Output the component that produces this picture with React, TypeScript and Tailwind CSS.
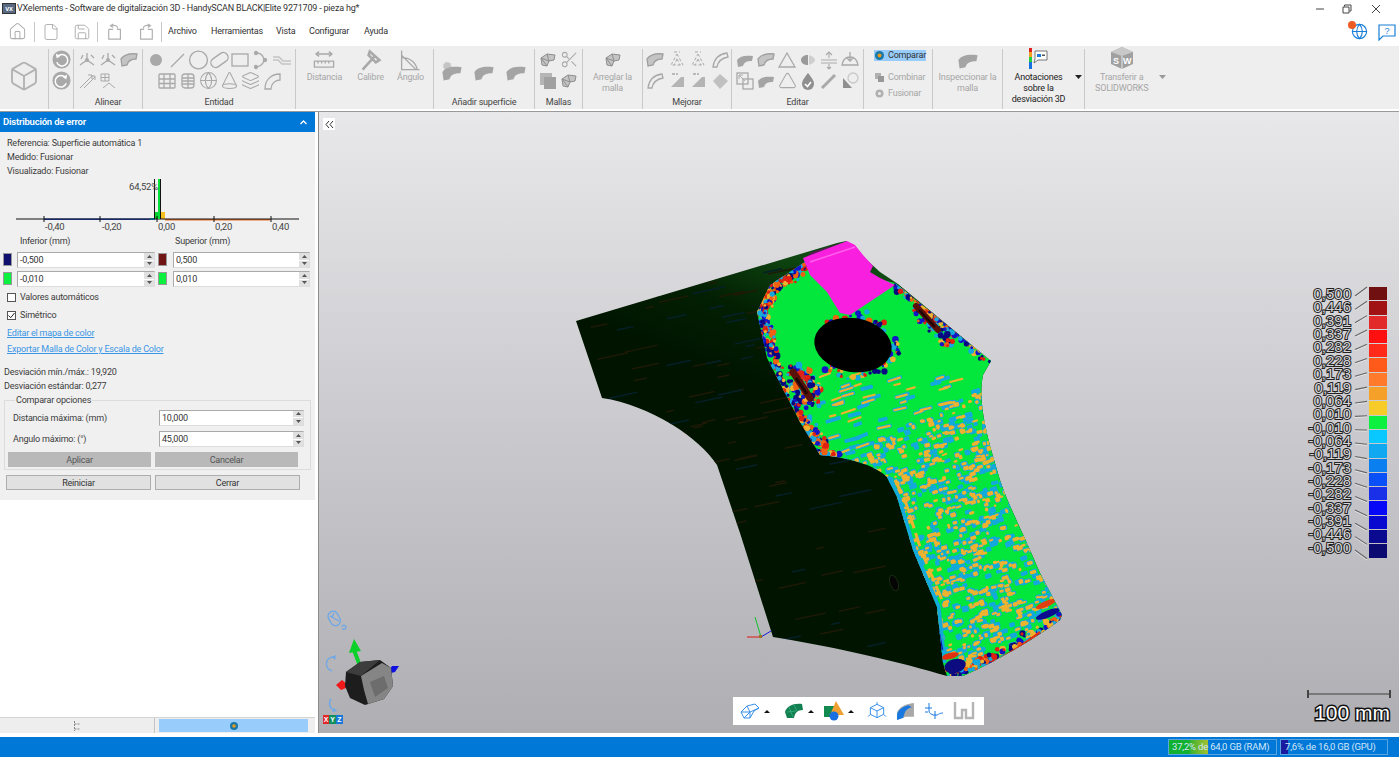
import type { ReactNode } from "react";
import { Box, Cone, File, Globe, House, Layers, Save, Scissors, Triangle } from "lucide-react";

const GREY = "#a9a9a9";

// seeded random, the speckle on the mesh has to stay the same between runs
const rng = (seed: number) => () => {
  seed = (seed + 0x6d2b79f5) | 0;
  let t = Math.imul(seed ^ (seed >>> 15), 1 | seed);
  t = (t + Math.imul(t ^ (t >>> 7), 61 | t)) ^ t;
  return ((t ^ (t >>> 14)) >>> 0) / 4294967296;
};

const RIGHT_SIDE =
  "L991 361 L983 375 C978 400 985 430 997 470 C1005 500 1020 525 1040 573 L1062 615 L1060 620 C1040 635 1000 660 963 676 L947 676";
const BODY = `M576 321 L837 243 L846 241 L880 272 L898 284 ${RIGHT_SIDE} C900 662 840 648 773 637 L740 533 L717 465 C700 438 650 405 602 398 Z`;
const COLORED = `M805 262 L895 283 ${RIGHT_SIDE} L943 663 L937 607 L913 550 L897 497 L887 477 C875 465 850 458 820 455 L800 422 L767 358 L757 312 L770 285 Z`;
const MAGENTA =
  "M803 258 L847 241 L855 245 L863 255 L873 266 L870 272 L880 278 L895 285 L850 315 L840 313 L827 292 L810 275 Z";

type Dot = { x: number; y: number; w: number; h: number; r: number; c: string };

const makeDots = () => {
  const r = rng(42);
  const cold: Dot[] = [];
  const warm: Dot[] = [];
  // speckle over the handle, sparse on the flat face
  for (let i = 0; i < 3100; i++) {
    const x = 815 + r() * 250;
    const y = 375 + r() * 305;
    const isFace = y < 458 - (x - 837) * 0.5;
    if (isFace && r() > 0.16) continue;
    const wave = Math.sin(x * 0.13 + y * 0.07) + Math.sin(y * 0.19 - x * 0.05);
    if (!isFace && wave < -0.7 && r() < 0.8) continue;
    const w = isFace ? 7 + r() * 9 : 2.5 + r() * 4;
    const h = isFace ? 2.2 : 2 + r() * 2.5;
    const a = -22 + r() * 10;
    if (r() < 0.7) cold.push({ x: x - 0.8, y: y - 0.8, w: w + 1.6, h: h + 1.6, r: a, c: "#13a9dc" });
    if (r() < 0.62) warm.push({ x, y, w, h, r: a, c: "#eeb32e" });
  }
  return [...cold, ...warm];
};

const alongEdge = (pts: number[][], n: number, spread: number, seed: number) => {
  const r = rng(seed);
  const cols = ["#1414c8", "#e02010", "#eeb32e", "#13a9dc", "#080880", "#f06010"];
  const out: { x: number; y: number; s: number; c: string }[] = [];
  for (let i = 0; i < n; i++) {
    const t = r() * (pts.length - 1);
    const k = Math.floor(t);
    const f = t - k;
    const a = pts[k];
    const b = pts[k + 1];
    out.push({
      x: a[0] + (b[0] - a[0]) * f + (r() - 0.3) * spread,
      y: a[1] + (b[1] - a[1]) * f + (r() - 0.5) * spread,
      s: 1.2 + r() * 2.2,
      c: cols[Math.floor(r() * cols.length)],
    });
  }
  return out;
};

const DOTS = makeDots();
const EDGE = [
  ...alongEdge([[805, 264], [772, 285], [759, 312], [769, 358], [802, 422], [822, 452]], 420, 14, 7),
  ...alongEdge([[895, 285], [945, 325], [989, 362]], 130, 8, 11),
  ...alongEdge([[947, 672], [990, 660], [1058, 618]], 170, 11, 13),
  ...alongEdge([[815, 452], [840, 456]], 30, 5, 21),
  // ring around the hole
  ...alongEdge([[817, 335], [830, 322], [860, 314], [888, 330], [896, 352], [880, 370], [850, 378], [825, 365]], 70, 8, 17),
  // both slots
  ...alongEdge([[795, 370], [812, 400]], 90, 18, 19),
  ...alongEdge([[915, 305], [945, 340]], 90, 16, 23),
];
const STREAKS = (() => {
  const r = rng(5);
  return Array.from({ length: 150 }, () => ({
    x: 585 + r() * 300,
    y: 270 + r() * 390,
    w: 8 + r() * 26,
    c: r() < 0.6 ? "#1f1a06" : "#06202a",
  }));
})();

const Model = () => (
  <g>
    <defs>
      <linearGradient id="bodyFill" x1="0.45" y1="0.02" x2="0.32" y2="0.32">
        <stop offset="0" stopColor="#0f4a12" />
        <stop offset="0.5" stopColor="#032003" />
        <stop offset="1" stopColor="#001400" />
      </linearGradient>
      <clipPath id="bodyClip">
        <path d={BODY} />
      </clipPath>
      <clipPath id="colorClip">
        <path d={COLORED} />
      </clipPath>
    </defs>
    <path d={BODY} fill="url(#bodyFill)" />
    <g clipPath="url(#bodyClip)">
      {STREAKS.map((s, i) => (
        <rect key={i} x={s.x} y={s.y} width={s.w} height={1.5} fill={s.c} transform={`rotate(-12 ${s.x} ${s.y})`} />
      ))}
    </g>
    <path d={COLORED} fill="#03e63c" />
    <g clipPath="url(#colorClip)">
      {DOTS.map((d, i) => (
        <rect key={i} x={d.x} y={d.y} width={d.w} height={d.h} rx={1.2} fill={d.c} transform={`rotate(${d.r} ${d.x} ${d.y})`} />
      ))}
      <path d="M887 477 L897 497 L913 550 L937 607 L943 663" fill="none" stroke="#13a9dc" strokeWidth="7" />
      <path d="M895 480 L905 500 L921 550 L945 607" fill="none" stroke="#eeb32e" strokeWidth="3" strokeDasharray="14 5" />
      <path d="M885 477 L895 500 L910 550 L934 607 L942 650" fill="none" stroke="#1414b0" strokeWidth="2.5" />
      {EDGE.map((d, i) => (
        <circle key={i} cx={d.x} cy={d.y} r={d.s} fill={d.c} />
      ))}
      <path d="M793 372 L810 398" stroke="#5a1208" strokeWidth="7" strokeLinecap="round" />
      <path d="M796 378 L807 394" stroke="#200604" strokeWidth="3" />
      <path d="M916 306 L938 330" stroke="#5a1208" strokeWidth="6" strokeLinecap="round" />
      <path d="M919 310 L935 327" stroke="#200604" strokeWidth="2.5" />
      <ellipse cx="955" cy="666" rx="11" ry="7" fill="#0c0c80" transform="rotate(-15 955 666)" />
      <ellipse cx="950" cy="656" rx="9" ry="3" fill="#e03010" transform="rotate(-15 950 656)" />
      <ellipse cx="1048" cy="614" rx="13" ry="3.5" fill="#0c0c90" transform="rotate(-22 1048 614)" />
      <ellipse cx="1046" cy="604" rx="11" ry="3" fill="#e04010" transform="rotate(-22 1046 604)" />
      <path d="M985 668 C1005 655 1025 645 1040 632" stroke="#e03010" strokeWidth="2.5" fill="none" />
    </g>
    <path d="M805 258 L838 244 L812 252 Z" fill="#5a1a5a" />
    <path d={MAGENTA} fill="#f820de" />
    <path d="M810 262 L855 247" stroke="#ff60ee" strokeWidth="1.5" fill="none" />
    <ellipse cx="853" cy="345" rx="39" ry="27" transform="rotate(9 853 345)" fill="#000" />
    <ellipse cx="894" cy="583" rx="4" ry="8" transform="rotate(-20 894 583)" fill="#050505" stroke="#1a2a10" />
  </g>
);

const Arrow = ({ d, fill }: { d: string; fill: string }) => <path d={d} fill={fill} />;

const Gizmo = () => (
  <g>
    <g fill="none" stroke="#6ea8e6" strokeWidth="1.3">
      <rect x="329" y="611" width="10" height="15" rx="5" transform="rotate(-28 334 618)" />
      <path d="M330 616 L339 621 M334 613 L332 617" />
      <path d="M342 627 a2 2 0 1 1 1 2 v1" />
      <path d="M335 657 a7 7 0 0 0 -3 14" />
      <path d="M331 699 a7 7 0 0 0 3 11" />
    </g>
    <path d="M332 657 L336 655 L335 660 Z M334 708 L337 711 L332 712 Z" fill="#6ea8e6" />
    <path d="M360 666 L354 650" stroke="#0cd02a" strokeWidth="4" />
    <Arrow d="M354 639 L361 651 L349 653 Z" fill="#0cd02a" />
    <Arrow d="M387 674 L392 666 L399 666 L395 672 Z" fill="#1010e0" />
    <Arrow d="M336 685 L342 680 L347 684 L346 688 L341 690 Z" fill="#f01818" />
    <path d="M346 672 L360 662 L380 660 L391 668 L393 686 L384 699 L365 705 L350 698 L345 686 Z" fill="#1d1d1d" />
    <path d="M361 676 L382 663 L391 668 L393 686 L384 699 L368 704 L364 690 Z" fill="#858585" />
    <path d="M346 672 L360 662 L380 660 L361 676 Z" fill="#3d3d3d" />
    <path d="M370 682 L384 676 L388 688 L375 697 Z" fill="#6d6d6d" />
  </g>
);

const Axes = () => (
  <g strokeWidth="1">
    <path d="M761 637 L755 617" stroke="#10c030" />
    <path d="M761 637 L747 637" stroke="#e01818" />
    <path d="M761 637 L771 631" stroke="#1818e0" />
    <rect x="759" y="635" width="3" height="3" fill="#a07020" />
  </g>
);

const Leaders = () => (
  <g fill="none" strokeWidth="1.1">
    {Array.from({ length: 20 }, (_, i) => {
      const from = 296 + i * 13.37;
      const to = 287 + i * 14.3;
      return (
        <g key={i}>
          <path d={`M1355 ${from + 1} L1367 ${to + 1}`} stroke="#e6e6e6" />
          <path d={`M1355 ${from} L1367 ${to}`} stroke="#666" />
        </g>
      );
    })}
    <path d="M1308 694 L1390 694" stroke="#666" strokeWidth="1.5" />
    <path d="M1308 690 L1308 698 M1390 690 L1390 698" stroke="#444" strokeWidth="2" />
  </g>
);

// ---- ribbon ----

const Ic = ({ children, s = 20 }: { children: ReactNode; s?: number }) => (
  <svg width={s} height={s} viewBox="0 0 20 20" fill="none" stroke={GREY} strokeWidth="1.3">
    {children}
  </svg>
);

const Patch = ({ s = 20, sun }: { s?: number; sun?: boolean }) => (
  <Ic s={s}>
    {sun && <circle cx="6" cy="5" r="3" fill="#c4c4c4" stroke="#c4c4c4" strokeDasharray="1 1" />}
    <path d="M2 10 C5 6 10 5 18 6 L17 11 C12 11 9 12 8 16 L3 17 Z" fill="#a4a4a4" stroke="none" />
  </Ic>
);
const PatchLight = () => (
  <Ic>
    <path d="M2 9 C5 5 10 3 18 4 L17 9 C12 9 9 11 8 15 L3 16 Z" fill="#c4c4c4" stroke="#a0a0a0" />
  </Ic>
);
const Mesh = () => (
  <Ic>
    <path d="M3 8 L9 4 L17 5 L16 10 L11 11 L9 16 L4 15 Z" fill="#c4c4c4" stroke="none" />
    <path d="M3 8 L9 4 L17 5 L16 10 L11 11 L9 16 L4 15 Z M9 4 L11 11 M3 8 L11 11 M3 8 L9 16" strokeWidth="1" stroke="#8e8e8e" />
  </Ic>
);
const Tri = () => (
  <Ic>
    <path d="M10 3 L18 17 L2 17 Z" />
  </Ic>
);
const TriDots = () => (
  <Ic>
    <path d="M10 4 L16 15 L4 15 Z M7 2 L13 2 M10 9 L7 15 M10 9 L13 15" strokeDasharray="3 2" strokeWidth="1" />
  </Ic>
);
const Swoop = () => (
  <Ic>
    <path d="M3 17 C4 9 9 4 17 3 L18 7 C12 8 8 11 7 17 Z" />
  </Ic>
);
const Wedge = () => (
  <Ic>
    <path d="M4 16 L14 6 L17 6 L17 16 Z" fill="#b4b4b4" stroke="none" />
    <path d="M5 3 L11 3" strokeDasharray="3 1" />
  </Ic>
);
const Axis = () => (
  <Ic>
    <path d="M10 10 L10 3 M10 10 L3 15 M10 10 L17 15 M6 5 L4 9 M14 5 L17 8" />
    <circle cx="10" cy="10" r="2" fill={GREY} stroke="none" />
  </Ic>
);
const Planes = () => (
  <Ic>
    <path d="M2 10 L18 10 M2 13 L18 13" strokeWidth="1.1" />
    <path d="M10 2 L10 8 M7 5 L10 2 L13 5 M10 14 L10 19 M8 17 L10 19 L12 17" strokeWidth="1.1" />
  </Ic>
);

const Cell = ({ children, w = "w-[21px]" }: { children: ReactNode; w?: string }) => (
  <div className={`${w} h-[21px] flex items-center justify-center`}>{children}</div>
);

const RibbonGroup = ({ w, label, children }: { w: string; label?: string; children: ReactNode }) => (
  <div className={`${w} h-[60px] mt-[3px] shrink-0 flex flex-col items-center border-r border-[#c9c9c9]`}>
    <div className="flex-1 flex flex-col items-center justify-start min-h-0">{children}</div>
    {label && <div className="h-[13px] leading-[13px] text-[9px] text-[#444] whitespace-nowrap">{label}</div>}
  </div>
);

const Row = ({ children }: { children: ReactNode }) => <div className="flex items-center">{children}</div>;

const Tool = ({ icon, lines, dark }: { icon: ReactNode; lines: string[]; dark?: boolean }) => (
  <div className="flex flex-col items-center">
    <div className="h-[21px] flex items-center justify-center">{icon}</div>
    <div className={`text-[9px] leading-[11px] text-center whitespace-nowrap mt-[2px] ${dark ? "text-[#222]" : "text-[#a6a6a6]"}`}>
      {lines.map((l) => (
        <div key={l}>{l}</div>
      ))}
    </div>
  </div>
);

const Caret = ({ c = "#222" }: { c?: string }) => (
  <svg width="7" height="4" viewBox="0 0 7 4">
    <path d="M0 0 L7 0 L3.5 4 Z" fill={c} />
  </svg>
);

const Ribbon = () => (
  <div className="h-[63px] bg-[#eeeeee] flex">
    <RibbonGroup w="w-[49px]">
      <div className="h-[54px] flex items-center">
        <Box size={32} color="#b2b2b2" strokeWidth={1.4} />
      </div>
    </RibbonGroup>
    <RibbonGroup w="w-[25px]">
      <Cell>
        <svg width="19" height="19" viewBox="0 0 20 20">
          <circle cx="10" cy="10" r="9.5" fill="#a9a9a9" />
          <path d="M6 7 a6 6 0 1 1 -1 6" fill="none" stroke="#fff" strokeWidth="1.6" />
          <path d="M4 4 L9 6 L5 9 Z" fill="#fff" />
        </svg>
      </Cell>
      <Cell>
        <svg width="19" height="19" viewBox="0 0 20 20">
          <circle cx="10" cy="10" r="9.5" fill="#a9a9a9" />
          <path d="M14 7 a6 6 0 1 0 1 6" fill="none" stroke="#fff" strokeWidth="1.6" />
          <path d="M16 4 L11 6 L15 9 Z" fill="#fff" />
        </svg>
      </Cell>
    </RibbonGroup>
    <RibbonGroup w="w-[69px]" label="Alinear">
      <Row>
        <Cell><Axis /></Cell>
        <Cell><Axis /></Cell>
        <Cell><PatchLight /></Cell>
      </Row>
      <Row>
        <Cell>
          <Ic>
            <path d="M3 17 L15 5 M7 17 L18 6 M11 4 L15 4 L15 8 M14 5 L18 5 L18 9" strokeWidth="1" />
          </Ic>
        </Cell>
        <Cell>
          <Ic>
            <path d="M3 3 H11 V10 H3 Z M7 3 V10 M3 6.5 H11 M11 12 L17 17 M11 12 L5 17" strokeWidth="1" />
          </Ic>
        </Cell>
        <Cell><span /></Cell>
      </Row>
    </RibbonGroup>
    <RibbonGroup w="w-[153px]" label="Entidad">
      <Row>
        <Cell><svg width="14" height="14"><circle cx="7" cy="7" r="6" fill={GREY} /></svg></Cell>
        <Cell><Ic><path d="M4 17 L17 4" /></Ic></Cell>
        <Cell><Ic s={22}><circle cx="10" cy="10" r="8.5" /></Ic></Cell>
        <Cell><Ic s={22}><rect x="1" y="5.5" width="18" height="9" rx="4.5" transform="rotate(-35 10 10)" /></Ic></Cell>
        <Cell><Ic s={20}><rect x="2" y="4" width="16" height="12" /></Ic></Cell>
        <Cell><Ic><path d="M6 3 C14 4 16 14 6 17" /><circle cx="5" cy="3" r="1.5" fill={GREY} /><circle cx="14" cy="10" r="1.5" fill={GREY} /><circle cx="5" cy="17" r="1.5" fill={GREY} /></Ic></Cell>
        <Cell><Ic><path d="M1 7 H7 L11 11 H19 M1 10 H6 L10 14 H19" stroke="#c4c4c4" strokeWidth="1.6" /></Ic></Cell>
      </Row>
      <Row>
        <Cell><Ic><rect x="2" y="3" width="16" height="14" rx="1" /><path d="M7 3 V17 M13 3 V17 M2 8 H18 M2 12.5 H18" /></Ic></Cell>
        <Cell><Ic><rect x="4" y="3" width="12" height="14" rx="3" /><path d="M10 3 V17 M4 7 H16 M4 10 H16 M4 13 H16" /></Ic></Cell>
        <Cell><Globe size={19} color={GREY} strokeWidth={1.3} /></Cell>
        <Cell><Cone size={19} color={GREY} strokeWidth={1.3} /></Cell>
        <Cell><Layers size={19} color={GREY} strokeWidth={1.3} /></Cell>
        <Cell><Ic><path d="M3 18 C3 9 9 3 18 3 L18 9 C13 9 9 13 9 18 Z" /></Ic></Cell>
      </Row>
    </RibbonGroup>
    <RibbonGroup w="w-[138px]">
      <div className="flex w-full">
        <div className="w-[52px] flex justify-center">
          <Tool
            lines={["Distancia"]}
            icon={
              <Ic s={24}>
                <path d="M3 5 H17 M3 5 L6 3 M3 5 L6 7 M17 5 L14 3 M17 5 L14 7 M2 11 H18 V16 H2 Z M5 11 V13 M8 11 V13 M11 11 V13 M14 11 V13" strokeWidth="1.1" />
              </Ic>
            }
          />
        </div>
        <div className="w-[40px] flex justify-center">
          <Tool
            lines={["Calibre"]}
            icon={
              <Ic s={24}>
                <path d="M3 18 L13 7 M9 3 L17 10 L14 12 L8 6 Z" strokeWidth="2.2" />
              </Ic>
            }
          />
        </div>
        <div className="w-[40px] flex justify-center">
          <Tool
            lines={["Ángulo"]}
            icon={
              <Ic s={24}>
                <path d="M3 2 V18 H18 M3 6 L15 18 M3 8 C10 8 15 12 16 18" strokeWidth="1.1" />
              </Ic>
            }
          />
        </div>
      </div>
    </RibbonGroup>
    <RibbonGroup w="w-[101px]" label="Añadir superficie">
      <div className="flex gap-[8px] h-[46px] items-center">
        <Patch s={24} sun />
        <Patch s={24} />
        <Patch s={24} />
      </div>
    </RibbonGroup>
    <RibbonGroup w="w-[48px]" label="Mallas">
      <Row>
        <Cell><Mesh /></Cell>
        <Cell><Scissors size={19} color={GREY} strokeWidth={1.3} /></Cell>
      </Row>
      <Row>
        <Cell><svg width="18" height="18"><rect x="1" y="1" width="12" height="12" fill="#b5b5b5" /><rect x="5" y="5" width="12" height="12" fill="#a0a0a0" /></svg></Cell>
        <Cell><Mesh /></Cell>
      </Row>
    </RibbonGroup>
    <RibbonGroup w="w-[60px]">
      <Tool lines={["Arreglar la", "malla"]} icon={<Mesh />} />
    </RibbonGroup>
    <RibbonGroup w="w-[89px]" label="Mejorar">
      <Row>
        <Cell w="w-[22px]"><PatchLight /></Cell>
        <Cell w="w-[21px]"><TriDots /></Cell>
        <Cell w="w-[22px]"><TriDots /></Cell>
        <Cell w="w-[21px]"><Swoop /></Cell>
      </Row>
      <Row>
        <Cell w="w-[22px]"><Swoop /></Cell>
        <Cell w="w-[21px]"><Wedge /></Cell>
        <Cell w="w-[22px]"><Wedge /></Cell>
        <Cell w="w-[21px]"><Ic><path d="M10 3 L18 10 L10 18 L3 10 Z" fill="#c0c0c0" stroke="none" /></Ic></Cell>
      </Row>
    </RibbonGroup>
    <RibbonGroup w="w-[132px]" label="Editar">
      <Row>
        <Cell><Patch /></Cell>
        <Cell><PatchLight /></Cell>
        <Cell><Tri /></Cell>
        <Cell><Ic><path d="M10 5 V15 C6 15 3 13 3 10 C3 7 6 5 10 5 Z" fill="#9a9a9a" stroke="none" /><path d="M11 5 C14 6 17 8 17 10 C17 12 14 14 11 15 Z" fill="#cfcfcf" stroke="none" /></Ic></Cell>
        <Cell><Planes /></Cell>
        <Cell><Ic><path d="M2 15 C3 9 6 7 10 7 C14 7 17 9 18 15 Z M10 2 V11 M7 8 L10 11 L13 8" /></Ic></Cell>
      </Row>
      <Row>
        <Cell><Ic><rect x="2" y="2" width="11" height="11" /><rect x="8" y="8" width="10" height="10" /><path d="M4 4 L10 10 M4 8 V4 H8" strokeWidth="1" /></Ic></Cell>
        <Cell><Patch /></Cell>
        <Cell><Triangle size={19} color={GREY} strokeWidth={1.3} /></Cell>
        <Cell><Ic><path d="M10 2 C6 7 4 10 4 13 a6 6 0 0 0 12 0 C16 10 14 7 10 2 Z" fill="#8f8f8f" stroke="none" /><path d="M7 13 L9.5 15.5 L13 11" stroke="#fff" strokeWidth="1.6" /></Ic></Cell>
        <Cell><Ic><path d="M3 17 L16 4" strokeWidth="3" /></Ic></Cell>
        <Cell><Ic><path d="M3 17 V7 L12 17 Z" fill="#8f8f8f" stroke="none" /><circle cx="13" cy="7" r="5" stroke="#c8c8c8" /></Ic></Cell>
      </Row>
    </RibbonGroup>
    <RibbonGroup w="w-[69px]">
      <div className="w-full pl-[5px] flex flex-col text-[9px] leading-[11px] text-[#a6a6a6]">
        <div className="h-[11px] flex items-center gap-[4px] bg-[#98ccfa] text-[#333] mt-[1px] mb-[11px] pl-[1px] mr-[1px]">
          <svg width="9" height="9"><circle cx="4.5" cy="4.5" r="4.5" fill="#1878a8" /><circle cx="4.5" cy="4.5" r="2" fill="#e89a20" /></svg>
          Comparar
        </div>
        <div className="h-[11px] flex items-center gap-[4px] mb-[5px] pl-[1px]">
          <svg width="9" height="9"><rect x="0" y="0" width="6" height="6" fill="#b0b0b0" /><rect x="3" y="3" width="6" height="6" fill="#989898" /></svg>
          Combinar
        </div>
        <div className="h-[11px] flex items-center gap-[4px] pl-[1px]">
          <svg width="9" height="9"><circle cx="4.5" cy="4.5" r="4" fill="#b0b0b0" /><circle cx="4.5" cy="4.5" r="1.5" fill="#eee" /></svg>
          Fusionar
        </div>
      </div>
    </RibbonGroup>
    <RibbonGroup w="w-[70px]">
      <Tool lines={["Inspeccionar la", "malla"]} icon={<Patch s={24} />} />
    </RibbonGroup>
    <RibbonGroup w="w-[82px]">
      <div className="flex items-start gap-[10px] pl-[7px]">
        <Tool
          dark
          lines={["Anotaciones", "sobre la", "desviación 3D"]}
          icon={
            <svg width="22" height="22" viewBox="0 0 22 22" className="-mt-[2px]">
              <rect x="2" y="0" width="3" height="4" fill="#e02020" />
              <rect x="2" y="4" width="3" height="5" fill="#f0a020" />
              <rect x="2" y="9" width="3" height="5" fill="#20d040" />
              <rect x="2" y="14" width="3" height="7" fill="#1870e0" />
              <path d="M8 3 H20 V12 H11 L7 15 L8 11 Z" fill="#fff" stroke="#555" strokeWidth="0.8" />
              <rect x="10" y="6" width="4" height="3" fill="#1878e0" />
              <rect x="15" y="6.5" width="3" height="1.5" fill="#555" />
            </svg>
          }
        />
        <div className="mt-[26px]"><Caret /></div>
      </div>
    </RibbonGroup>
    <div className="flex items-start mt-[3px] pl-[10px] gap-[11px]">
      <Tool
        lines={["Transferir a", "SOLIDWORKS"]}
        icon={
          <svg width="24" height="24" viewBox="0 0 24 24" className="-mt-[4px]">
            <path d="M12 1 L23 6 V18 L12 23 L1 18 V6 Z" fill="#a0a0a0" />
            <path d="M12 1 L23 6 L12 10 L1 6 Z" fill="#c8c8c8" />
            <path d="M12 10 V23" stroke="#e8e8e8" />
            <text x="3" y="18" fontSize="9" fontWeight="700" fill="#fff" fontFamily="Liberation Sans">S</text>
            <text x="13" y="18" fontSize="9" fontWeight="700" fill="#fff" fontFamily="Liberation Sans">W</text>
          </svg>
        }
      />
      <div className="mt-[26px]"><Caret c="#999" /></div>
    </div>
  </div>
);

// ---- top rows ----

const TitleBar = () => (
  <div className="h-[17px] flex items-center bg-white">
    <div className="w-[14px] h-[11px] ml-[2px] bg-[#5a6a82] border border-[#333] text-[6px] leading-[9px] text-white text-center font-bold overflow-hidden">VX</div>
    <div className="ml-[1px] text-[9px] text-[#333] whitespace-nowrap">VXelements - Software de digitalización 3D - HandySCAN BLACK|Elite 9271709 - pieza hg*</div>
    <div className="ml-auto flex items-center text-[#333]">
      <svg width="10" height="10" className="mr-[17px]"><path d="M1 5 H9" stroke="#444" /></svg>
      <svg width="10" height="10" className="mr-[19px]"><path d="M2.5 2.5 V1 H9 V7 H7.5 M1 3 H7 V9 H1 Z" fill="none" stroke="#444" /></svg>
      <svg width="10" height="10" className="mr-[18px]"><path d="M1 1 L9 9 M9 1 L1 9" stroke="#444" /></svg>
    </div>
  </div>
);

const Sep = () => <div className="w-px h-[20px] bg-[#c6c6c6]" />;

const PageArrow = ({ flip }: { flip?: boolean }) => (
  <svg width="18" height="18" viewBox="0 0 20 20" fill="none" stroke="#b0b0b0" strokeWidth="1.3" className={flip ? "-scale-x-100" : ""}>
    <path d="M3 7 H8 M12 7 H16 V18 H3 V7" />
    <path d="M13 6 C13 3 10 2 6 3 M8 1 L5 3 L8 5" />
  </svg>
);

const MenuBar = () => (
  <div className="h-[29px] flex items-center bg-white text-[9px] text-[#333]">
    <div className="w-[34px] flex justify-center"><House size={19} color="#b0b0b0" strokeWidth={1.3} /></div>
    <Sep />
    <div className="w-[30px] flex justify-center ml-[1px]"><File size={18} color="#b0b0b0" strokeWidth={1.3} /></div>
    <div className="w-[31px] flex justify-center"><Save size={18} color="#b0b0b0" strokeWidth={1.3} /></div>
    <Sep />
    <div className="w-[31px] flex justify-center ml-[1px]"><PageArrow /></div>
    <div className="w-[31px] flex justify-center"><PageArrow flip /></div>
    <Sep />
    <div className="ml-[6px] w-[43px]">Archivo</div>
    <div className="w-[65px]">Herramientas</div>
    <div className="w-[33px]">Vista</div>
    <div className="w-[55px]">Configurar</div>
    <div>Ayuda</div>
    <div className="ml-auto flex items-center gap-[10px] mr-[3px]">
      <div className="relative">
        <Globe size={17} color="#1a7fd8" strokeWidth={1.6} />
        <div className="absolute -top-[2px] -left-[3px] w-[8px] h-[8px] rounded-full bg-[#ee5a24]" />
      </div>
      <svg width="18" height="18" viewBox="0 0 18 18">
        <path d="M1 2 H17 V13 H5 L1 17 Z" fill="none" stroke="#1a7fd8" strokeWidth="1.2" />
        <text x="6.5" y="11" fontSize="9" fill="#1a7fd8" fontFamily="Liberation Sans">?</text>
      </svg>
    </div>
  </div>
);

// ---- left panel ----

const Spin = ({ value, w }: { value: string; w: string }) => (
  <div className={`${w} h-[16px] flex bg-white border border-[#aaa] border-r-[#ddd] border-b-[#ddd]`}>
    <div className="flex-1 pl-[2px] text-[9px] leading-[14px] text-[#333]">{value}</div>
    <div className="w-[10px] flex flex-col gap-px bg-white">
      <div className="flex-1 bg-[#e0e0e0] flex items-center justify-center">
        <svg width="5" height="3"><path d="M2.5 0 L5 3 H0 Z" fill="#555" /></svg>
      </div>
      <div className="flex-1 bg-[#e0e0e0] flex items-center justify-center">
        <svg width="5" height="3"><path d="M0 0 H5 L2.5 3 Z" fill="#555" /></svg>
      </div>
    </div>
  </div>
);

const Histogram = () => (
  <svg width="315" height="56" viewBox="0 178 315 56" className="block">
    <rect x="44" y="218.5" width="106" height="1.5" fill="#2040c0" />
    <rect x="150" y="218" width="5" height="2" fill="#10b0e0" />
    <rect x="165" y="219" width="105" height="1.5" fill="#e8702a" />
    <rect x="155" y="212" width="3" height="7" fill="#05d030" />
    <rect x="161" y="212" width="4" height="7" fill="#f5c020" />
    <path d="M16 219 H299" stroke="#111" strokeWidth="1.2" />
    <path d="M44 216 V222 M100 216 V222 M157 216 V222 M214 216 V222 M271 216 V222" stroke="#111" />
    <rect x="158" y="179" width="2.5" height="40" fill="#03e03c" />
    <path d="M154.5 179 V219 M160.5 179 V219" stroke="#111" />
    <g fontSize="9.5" fill="#444" fontFamily="Roboto">
      <text x="129" y="190">64,52%</text>
      <text x="45" y="230">-0,40</text>
      <text x="102" y="230">-0,20</text>
      <text x="158" y="230">0,00</text>
      <text x="215" y="230">0,20</text>
      <text x="272" y="230">0,40</text>
    </g>
  </svg>
);

const Check = ({ on, label }: { on?: boolean; label: string }) => (
  <div className="h-[14px] flex items-center pl-[7px] gap-[4px]">
    <div className="w-[9px] h-[9px] bg-white border border-[#555] flex items-center justify-center">
      {on && (
        <svg width="7" height="7" viewBox="0 0 7 7">
          <path d="M0.5 3.5 L2.7 5.7 L6.5 1" fill="none" stroke="#222" />
        </svg>
      )}
    </div>
    <span>{label}</span>
  </div>
);

const Btn = ({ label, w, off }: { label: string; w: string; off?: boolean }) => (
  <div
    className={`${w} h-[15px] flex items-center justify-center border text-[9px] ${
      off ? "bg-[#b9b9b9] border-[#b9b9b9] text-[#555]" : "bg-[#e1e1e1] border-[#adadad] text-[#333]"
    }`}
  >
    {label}
  </div>
);

const Panel = () => (
  <div className="w-[315px] shrink-0 flex flex-col text-[9px] leading-[14px] text-[#3c3c3c]">
    <div className="h-[20px] bg-[#0078d7] flex items-center justify-between pl-[3px] pr-[8px] text-white font-semibold text-[9.5px]">
      <span>Distribución de error</span>
      <svg width="7" height="5"><path d="M0.5 4 L3.5 1 L6.5 4" fill="none" stroke="#fff" strokeWidth="1.3" /></svg>
    </div>
    <div className="h-[368px] bg-[#f0f0f0] pt-[4px]">
      <div className="pl-[7px]">Referencia: Superficie automática 1</div>
      <div className="pl-[7px]">Medido: Fusionar</div>
      <div className="pl-[7px]">Visualizado: Fusionar</div>
      <Histogram />
      <div className="flex">
        <div className="w-[175px] pl-[20px]">Inferior (mm)</div>
        <div>Superior (mm)</div>
      </div>
      <div className="mt-[4px] flex flex-col gap-[3px]">
        {[
          ["#10106e", "-0,500", "#701414", "0,500"],
          ["#0cf040", "-0,010", "#0cf040", "0,010"],
        ].map(([a, av, b, bv]) => (
          <div key={av} className="flex h-[16px]">
            <div className="w-[9px] h-[13px] ml-[3px] mr-[5px] mt-[1px] border border-[#999]" style={{ background: a }} />
            <Spin value={av} w="w-[138px]" />
            <div className="w-[9px] h-[13px] ml-[3px] mr-[6px] mt-[1px] border border-[#999]" style={{ background: b }} />
            <Spin value={bv} w="w-[137px]" />
          </div>
        ))}
      </div>
      <div className="mt-[3px]"><Check label="Valores automáticos" /></div>
      <div className="mt-[4px]"><Check on label="Simétrico" /></div>
      <div className="mt-[4px] pl-[7px] text-[#3a96e6] underline">Editar el mapa de color</div>
      <div className="mt-[2px] pl-[7px] text-[#3a96e6] underline">Exportar Malla de Color y Escala de Color</div>
      <div className="mt-[9px] pl-[4px]">Desviación mín./máx.: 19,920</div>
      <div className="pl-[4px]">Desviación estándar: 0,277</div>
      <fieldset className="ml-[4px] w-[307px] h-[77px] border border-[#dcdcdc] px-[4px]">
        <legend className="ml-[6px] px-px">Comparar opciones</legend>
        <div className="mt-[2px] h-[17px] flex items-center">
          <div className="w-[150px] pl-[4px]">Distancia máxima: (mm)</div>
          <Spin value="10,000" w="w-[145px]" />
        </div>
        <div className="mt-[5px] h-[16px] flex items-center">
          <div className="w-[150px] pl-[4px]">Angulo máximo: (°)</div>
          <Spin value="45,000" w="w-[145px]" />
        </div>
        <div className="mt-[5px] flex gap-[4px] -ml-px">
          <Btn off label="Aplicar" w="w-[143px]" />
          <Btn off label="Cancelar" w="w-[143px]" />
        </div>
      </fieldset>
      <div className="mt-[5px] ml-[6px] flex gap-[4px]">
        <Btn label="Reiniciar" w="w-[145px]" />
        <Btn label="Cerrar" w="w-[145px]" />
      </div>
    </div>
    <div className="flex-1 bg-white" />
    <div className="h-[16px] bg-[#eeeeee] border-t border-[#d4d4d4] flex items-center">
      <div className="w-[155px] h-full flex items-center justify-center border-r border-[#c4c4c4]">
        <svg width="8" height="10" viewBox="0 0 8 10">
          <path d="M1.5 0 V10 M1.5 3 H7 M1.5 8 H7" stroke="#888" strokeDasharray="2 1" />
        </svg>
      </div>
      <div className="ml-[4px] w-[149px] h-[13px] bg-[#98ccfa] flex items-center justify-center">
        <svg width="8" height="8"><circle cx="4" cy="4" r="4" fill="#1878a8" /><circle cx="4" cy="4" r="1.8" fill="#e89a20" /></svg>
      </div>
    </div>
  </div>
);

// ---- viewport ----

const SCALE = ["0,500", "0,446", "0,391", "0,337", "0,282", "0,228", "0,173", "0,119", "0,064", "0,010", "-0,010", "-0,064", "-0,119", "-0,173", "-0,228", "-0,282", "-0,337", "-0,391", "-0,446", "-0,500"];
const BANDS = ["#701010", "#a01214", "#e22a2a", "#ff1010", "#ff2a1a", "#ff5a1a", "#ff7a2a", "#f5a028", "#f8cc28", "#0cf040", "#08c8ff", "#10a8f0", "#0a80f0", "#0a50f8", "#1a30e8", "#0808f8", "#0808d0", "#0a0a90", "#0a0a70"];

const Legend = () => (
  <div className="absolute left-[995px] top-[175px] flex gap-[18px] tracking-normal">
    <div className="w-[37px] flex flex-col items-end">
      {SCALE.map((s) => (
        <div
          key={s}
          className="h-[13.37px] leading-[13.37px] text-[15px] text-[#d4d4d6] [font-family:'Liberation_Sans',sans-serif] [-webkit-text-stroke:2px_#222] [paint-order:stroke_fill] whitespace-nowrap"
        >
          {s}
        </div>
      ))}
    </div>
    <div className="w-[18px] flex flex-col gap-px">
      {BANDS.map((c) => (
        <div key={c} className="h-[13.3px]" style={{ background: c }} />
      ))}
    </div>
  </div>
);

const ViewTools = () => (
  <div className="absolute left-[414px] top-[585px] w-[251px] h-[28px] bg-white flex items-center pl-[7px]">
    <svg width="20" height="18" viewBox="0 0 20 18" fill="none" stroke="#3a90e8">
      <path d="M1 10 L7 4 L15 2 L19 6 L14 9 L10 16 L4 16 Z M7 4 L10 10 L19 6 M1 10 L10 10 L4 16 M10 10 L10 16" />
    </svg>
    <div className="ml-[4px] mr-[14px]"><svg width="6" height="3"><path d="M3 0 L6 3 H0 Z" fill="#111" /></svg></div>
    <svg width="20" height="18" viewBox="0 0 20 18">
      <path d="M1 10 C3 4 9 1 18 2 L19 8 C13 8 11 11 10 16 L3 16 Z" fill="#128050" />
      <path d="M5 5 L9 15 M10 3 L13 9 M3 10 L12 9" stroke="#3ab080" strokeWidth="0.8" />
    </svg>
    <div className="ml-[4px] mr-[10px]"><svg width="6" height="3"><path d="M3 0 L6 3 H0 Z" fill="#111" /></svg></div>
    <svg width="20" height="20" viewBox="0 0 20 20">
      <rect x="0" y="5" width="11" height="11" fill="#128a50" />
      <path d="M12 0 L20 14 H6 Z" fill="#f0a030" />
      <circle cx="10" cy="15" r="4.5" fill="#1a70e0" />
    </svg>
    <div className="ml-[4px] mr-[13px]"><svg width="6" height="3"><path d="M3 0 L6 3 H0 Z" fill="#111" /></svg></div>
    <svg width="20" height="20" viewBox="0 0 18 18" fill="none" stroke="#3a90e8" strokeWidth="0.9">
      <path d="M9 3 L15 6 V12 L9 15 L3 12 V6 Z M3 6 L9 9 L15 6 M9 9 V15 M9 1 V3 M1 14 L3 12 M17 14 L15 12" />
    </svg>
    <div className="ml-[9px]">
      <svg width="19" height="19" viewBox="0 0 18 18">
        <path d="M1 10 C3 5 8 2 17 1 V14 H9 L1 17 Z" fill="#a8a8a8" />
        <path d="M1 12 C2 7 7 4 12 3 L15 5 C10 6 8 9 7 15 L1 17 Z" fill="#1878e0" />
      </svg>
    </div>
    <div className="ml-[9px]">
      <svg width="20" height="18" viewBox="0 0 20 18" fill="none" stroke="#1878e0" strokeWidth="1">
        <path d="M5 1 V9 C5 12 8 12 9 13 H13 C14 13 15 11 19 11 M1 6 H8 M11 9 V17 M1 10 H4" />
      </svg>
    </div>
    <div className="ml-[9px]">
      <svg width="22" height="20" viewBox="0 0 22 20" fill="none" stroke="#b4b4b4" strokeWidth="2.4">
        <path d="M2 1 V17 H9 V9 H13 V17 H20 V1" />
      </svg>
    </div>
  </div>
);

const Viewport = () => (
  <div className="relative flex-1 border-l border-[#8c8c8c] bg-linear-to-b from-[#e8e8eb] to-[#aeaeb3] overflow-hidden">
    <svg className="absolute inset-0 w-full h-full" viewBox="319 112 1080 621">
      <Model />
      <Axes />
      <Gizmo />
      <Leaders />
    </svg>
    <div className="absolute left-[4px] top-[6px] w-[12px] h-[12px] bg-white flex items-center justify-center">
      <svg width="9" height="9"><path d="M4 1 L1 4.5 L4 8 M8 1 L5 4.5 L8 8" fill="none" stroke="#333" /></svg>
    </div>
    <Legend />
    <ViewTools />
    <div className="absolute left-[4px] top-[603px] flex text-[7px] leading-[9px] font-bold text-white tracking-normal [font-family:'Liberation_Sans',sans-serif]">
      <span className="w-[6px] text-center bg-[#e02828]">X</span>
      <span className="w-[7px] text-center bg-[#109060]">Y</span>
      <span className="w-[7px] text-center bg-[#1878d8]">Z</span>
    </div>
    <div className="absolute right-[9px] top-[589px] text-[21px] leading-[24px] text-white tracking-normal [font-family:'Liberation_Sans',sans-serif] [-webkit-text-stroke:3px_#111] [paint-order:stroke_fill] whitespace-nowrap">100 mm</div>
  </div>
);

const StatusBar = () => (
  <div className="h-[20px] bg-[#0078d7] flex items-center justify-end pr-[11px] gap-[3px] text-[9.5px] text-[#d4e6f8]">
    <div className="relative w-[109px] h-[16px] border border-[#5aa4e0] leading-[14px] pl-[3px] overflow-hidden whitespace-nowrap">
      <div className="absolute left-0 top-0 bottom-0 w-[39px] bg-linear-to-r from-[#10b030] via-[#10b030] to-[#a0c030]" />
      <span className="relative">37,2% de 64,0 GB (RAM)</span>
    </div>
    <div className="relative w-[108px] h-[16px] border border-[#5aa4e0] leading-[14px] pl-[4px] overflow-hidden whitespace-nowrap">
      <div className="absolute left-0 top-0 bottom-0 w-[7px] bg-[#1a1aa0]" />
      <span className="relative">7,6% de 16,0 GB (GPU)</span>
    </div>
  </div>
);

export default function App() {
  return (
    <div className="w-[1399px] h-[757px] overflow-hidden flex flex-col bg-white tracking-[-0.2px] [font-family:'Roboto',sans-serif]">
      <TitleBar />
      <MenuBar />
      <Ribbon />
      <div className="h-[3px] bg-white border-b border-[#9a9a9a]" />
      <div className="flex h-[621px]">
        <Panel />
        <div className="w-[3px] bg-white" />
        <Viewport />
      </div>
      <div className="h-[4px] bg-white" />
      <StatusBar />
    </div>
  );
}
